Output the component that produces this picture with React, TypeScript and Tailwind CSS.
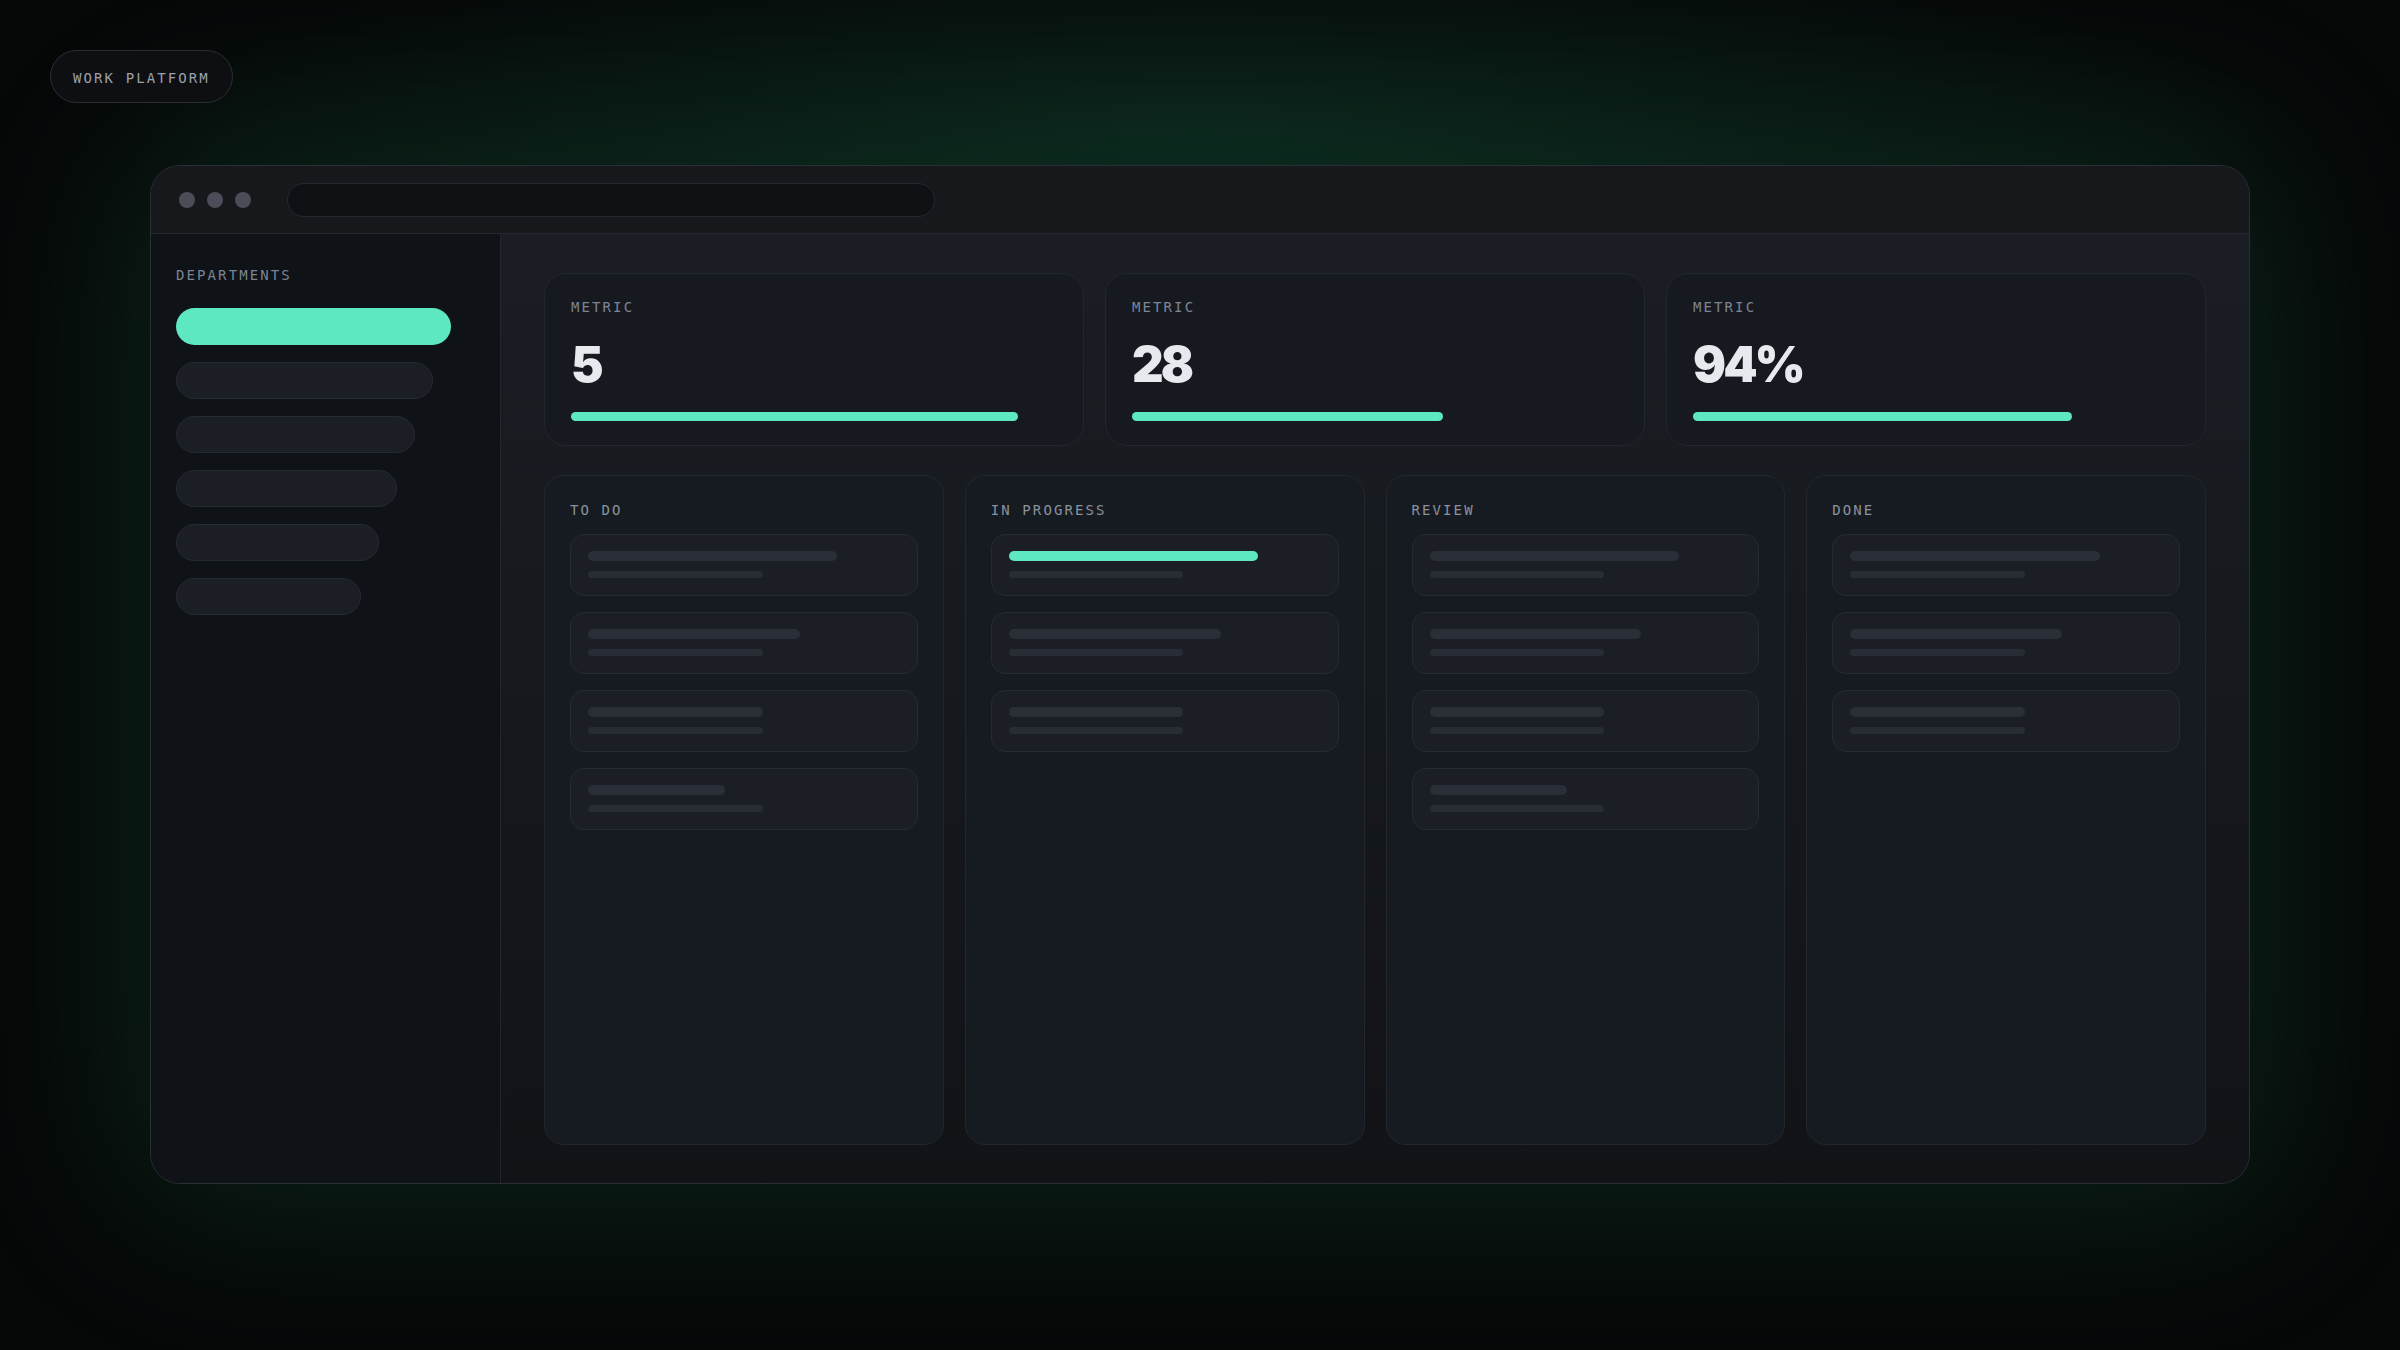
const mono = { fontFamily: '"DejaVu Sans Mono", "Liberation Mono", monospace' };
const sans = { fontFamily: 'Inter, "Noto Sans", sans-serif' };

const departments = [92, 86, 80, 74, 68, 62];

const metrics = [
  { label: 'METRIC', value: '5', pct: 92 },
  { label: 'METRIC', value: '28', pct: 64 },
  { label: 'METRIC', value: '94%', pct: 78 },
];

const columns = [
  { title: 'TO DO', tasks: [80, 68, 56, 44], active: -1 },
  { title: 'IN PROGRESS', tasks: [80, 68, 56], active: 0 },
  { title: 'REVIEW', tasks: [80, 68, 56, 44], active: -1 },
  { title: 'DONE', tasks: [80, 68, 56], active: -1 },
];

function Label({ children }: { children: string }) {
  return (
    <div style={mono} className="text-[14px] leading-[20px] tracking-[0.15em] text-[#7c8595]">
      {children}
    </div>
  );
}

function TaskCard({ width, active }: { width: number; active: boolean }) {
  return (
    <div className="rounded-[14px] border border-[#262a31] bg-[#1b1e25] px-[17px] pt-[16px] pb-[17px]">
      <div
        className={active ? 'h-[10px] rounded-full bg-[#5de8c1]' : 'h-[10px] rounded-full bg-[#2a2e37]'}
        style={{ width: `${width}%` }}
      />
      <div className="mt-[10px] h-[7px] w-[56%] rounded-full bg-[#282c34]" />
    </div>
  );
}

export default function App() {
  return (
    <div className="relative h-[1350px] w-[2400px] overflow-hidden bg-[#060808] bg-[radial-gradient(ellipse_60%_22%_at_50%_10%,rgba(24,92,66,0.28),transparent_75%)]">
      <div className="px-[50px] pt-[50px]">
        {/* Badge */}
        <div
          style={mono}
          className="inline-flex h-[53px] items-center rounded-full border border-[#2a2d34] bg-[#0d0f12] px-[22px] pt-[3px] text-[14px] tracking-[0.15em] text-[#9aa1ab]"
        >
          WORK PLATFORM
        </div>

        {/* Window */}
        <div className="mx-[100px] mt-[62px] flex h-[1019px] w-[2100px] flex-col overflow-hidden rounded-[30px] border border-[#2a2e35] bg-[#15171b] shadow-[0_0_180px_20px_rgba(30,140,95,0.2)]">
          {/* Title bar */}
          <div className="flex h-[68px] shrink-0 items-center border-b border-[#24272d] bg-[#17181c] pl-[28px]">
            <div className="flex gap-[12px]">
              <span className="h-4 w-4 rounded-full bg-[#4b4e58]" />
              <span className="h-4 w-4 rounded-full bg-[#4b4e58]" />
              <span className="h-4 w-4 rounded-full bg-[#4b4e58]" />
            </div>
            <div className="ml-[36px] h-[34px] w-[648px] rounded-full border border-[#26292f] bg-[#0f1013]" />
          </div>

          <div className="flex flex-1">
            {/* Sidebar */}
            <aside className="w-[350px] shrink-0 border-r border-[#22252b] bg-[#0f1217] px-[25px] pt-[31px]">
              <div style={mono} className="text-[14px] leading-[20px] tracking-[0.15em] text-[#7b8494]">
                DEPARTMENTS
              </div>
              <div className="mt-[23px] flex flex-col gap-[17px]">
                {departments.map((w, i) => (
                  <div
                    key={i}
                    className={
                      i === 0
                        ? 'h-[37px] rounded-full bg-[#5de8c1]'
                        : 'h-[37px] rounded-full border border-[#262a31] bg-[#1b1e25]'
                    }
                    style={{ width: `${w}%` }}
                  />
                ))}
              </div>
            </aside>

            {/* Main */}
            <main className="flex flex-1 flex-col gap-[29px] bg-gradient-to-b from-[#1a1d23] to-[#111317] px-[43px] pt-[39px] pb-[38px]">
              <div className="grid grid-cols-3 gap-[21px]">
                {metrics.map((m, i) => (
                  <div key={i} className="rounded-[22px] border border-[#22262d] bg-[#161920] px-[26px] pt-[23px] pb-[24px]">
                    <Label>{m.label}</Label>
                    <div style={sans} className="mt-[23px] text-[49px] leading-[50px] font-black tracking-[-0.06em] text-[#e8e9ee]">
                      {m.value}
                    </div>
                    <div className="mt-[22px] h-[9px] rounded-full bg-[#5de8c1]" style={{ width: `${m.pct}%` }} />
                  </div>
                ))}
              </div>

              <div className="grid flex-1 grid-cols-4 gap-[21px]">
                {columns.map((c) => (
                  <div key={c.title} className="rounded-[20px] border border-[#22262d] bg-[#161a21] px-[25px] pt-[24px]">
                    <div style={mono} className="text-[14px] leading-[20px] tracking-[0.15em] text-[#8b929d]">
                      {c.title}
                    </div>
                    <div className="mt-[14px] flex flex-col gap-[16px]">
                      {c.tasks.map((w, i) => (
                        <TaskCard key={i} width={w} active={i === c.active} />
                      ))}
                    </div>
                  </div>
                ))}
              </div>
            </main>
          </div>
        </div>
      </div>
    </div>
  );
}
